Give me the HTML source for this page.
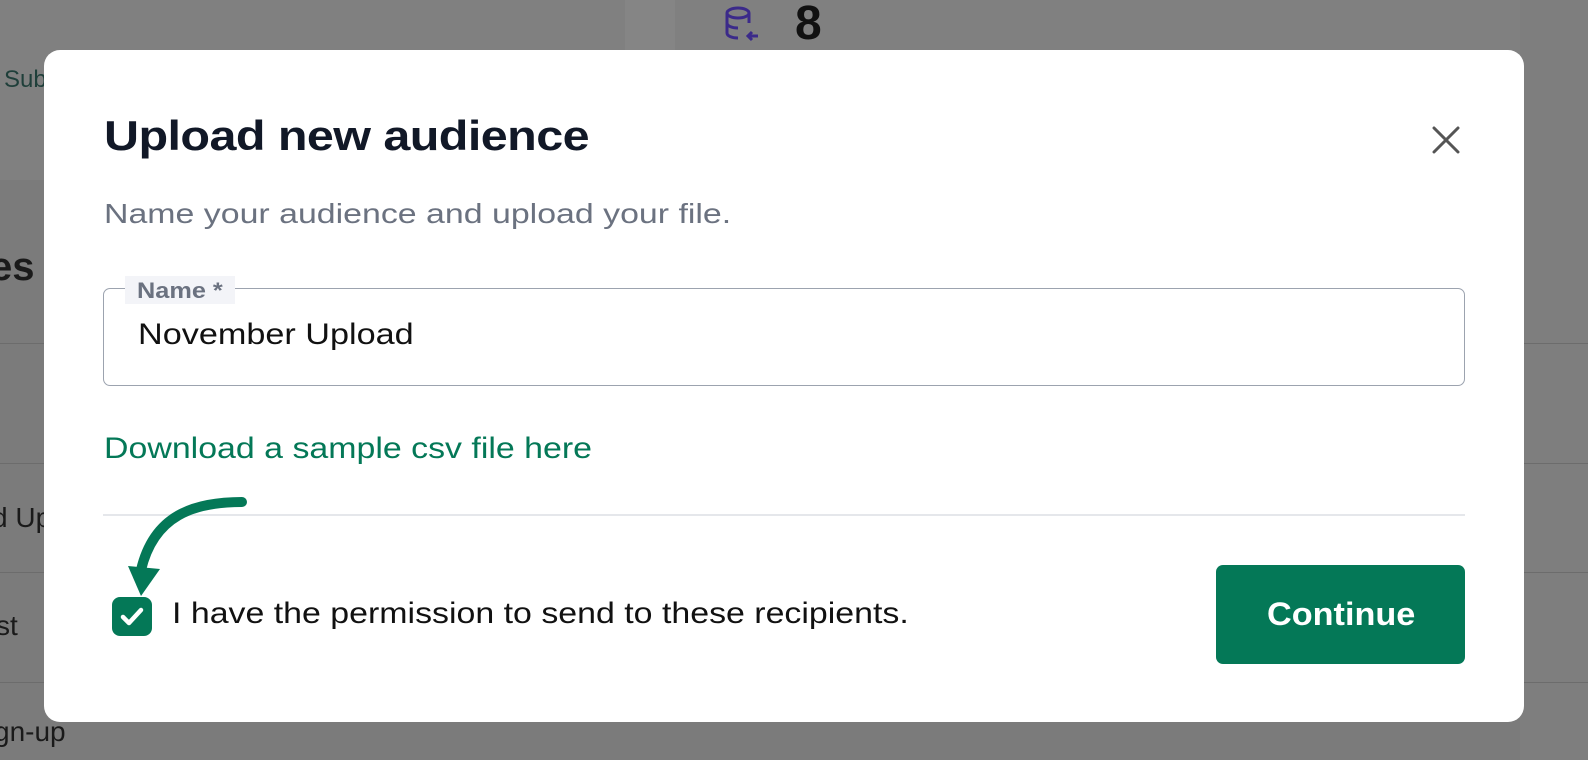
<!DOCTYPE html>
<html><head><style>
body{margin:0;width:1588px;height:760px;overflow:hidden;background:#7b7b7b;font-family:"Liberation Sans",sans-serif;position:relative}
.bg{position:absolute;color:#1a1a1a}
.modal{position:absolute;left:44px;top:50px;width:1480px;height:672px;background:#fff;border-radius:16px}
.s{transform-origin:0 50%;white-space:nowrap}
</style></head><body>
<div class="bg" style="left:0;top:0;width:1588px;height:180px;background:#808080"></div>
<div class="bg" style="left:625px;top:0;width:50px;height:50px;background:#858585"></div>
<div class="bg" style="left:1520px;top:0;width:68px;height:760px;background:#7e7e7e"></div>
<div class="bg" style="left:0;top:343px;width:1588px;height:1px;background:#6c6c6c"></div>
<div class="bg" style="left:0;top:463px;width:1588px;height:1px;background:#6c6c6c"></div>
<div class="bg" style="left:0;top:572px;width:1588px;height:1px;background:#6c6c6c"></div>
<div class="bg" style="left:0;top:682px;width:1588px;height:1px;background:#6c6c6c"></div>
<div class="bg" style="left:4px;top:66px;font-size:24px;color:#1f3f3a">Sub</div>
<div class="bg" style="left:-10px;top:245px;font-size:40px;font-weight:bold">es</div>
<div class="bg" style="left:-8px;top:502px;font-size:28px">d Up</div>
<div class="bg" style="left:-4px;top:610px;font-size:28px">st</div>
<div class="bg" style="left:-6px;top:716px;font-size:28px">gn-up</div>
<svg class="bg" style="left:722px;top:4px" width="40" height="40" viewBox="0 0 40 40" fill="none" stroke="#3b2a8a" stroke-width="3"><ellipse cx="16" cy="9" rx="11" ry="5"/><path d="M5 9v20c0 3 5 5 11 5M27 9v10M5 19c0 3 5 5 11 5"/><path d="M36 32h-9M30 28l-4 4 4 4"/></svg>
<div class="bg" style="left:795px;top:-4px;font-size:48px;font-weight:bold;color:#111">8</div>
<div class="modal">
<div class="s" style="position:absolute;left:60px;top:62px;font-size:42px;font-weight:bold;color:#111827;letter-spacing:-0.5px;transform:scaleX(1.155)">Upload new audience</div>
<svg style="position:absolute;left:1387px;top:75px" width="30" height="30" viewBox="0 0 30 30" stroke="#555" stroke-width="3" stroke-linecap="round"><path d="M3 3L27 27M27 3L3 27"/></svg>
<div class="s" style="position:absolute;left:60px;top:148px;font-size:28px;color:#6b7280;transform:scaleX(1.21)">Name your audience and upload your file.</div>
<div style="position:absolute;left:59px;top:238px;width:1360px;height:96px;border:1px solid #9ca3af;border-radius:7px"></div>
<div style="position:absolute;left:81px;top:226px;background:#f3f4f8;width:110px;height:28px"></div>
<div class="s" style="position:absolute;left:93px;top:228px;font-size:22px;font-weight:bold;color:#6b7280;transform:scaleX(1.15)">Name *</div>
<div class="s" style="position:absolute;left:94px;top:268px;font-size:30px;color:#111;transform:scaleX(1.14)">November Upload</div>
<div class="s" style="position:absolute;left:60px;top:382px;font-size:30px;color:#047857;transform:scaleX(1.13)">Download a sample csv file here</div>
<div style="position:absolute;left:59px;top:464px;width:1362px;height:2px;background:#e5e7eb"></div>
<svg style="position:absolute;left:0;top:0" width="300" height="600"><path d="M198 452C150 452 110 465 97 520" fill="none" stroke="#047857" stroke-width="10" stroke-linecap="round"/><path d="M84 516L116 519L97 546Z" fill="#047857"/></svg>
<div style="position:absolute;left:68px;top:547px;width:40px;height:39px;background:#047857;border-radius:8px"></div>
<svg style="position:absolute;left:68px;top:547px" width="40" height="39"><path d="M11 20L17 26L29 13" fill="none" stroke="#fff" stroke-width="4.5" stroke-linecap="round" stroke-linejoin="round"/></svg>
<div class="s" style="position:absolute;left:128px;top:547px;font-size:30px;color:#111;transform:scaleX(1.13)">I have the permission to send to these recipients.</div>
<div style="position:absolute;left:1172px;top:515px;width:249px;height:99px;background:#047857;border-radius:7px"></div>
<div class="s" style="position:absolute;left:1223px;top:515px;line-height:99px;color:#fff;font-size:32px;font-weight:bold;transform:scaleX(1.07)">Continue</div>
</div>
</body></html>
